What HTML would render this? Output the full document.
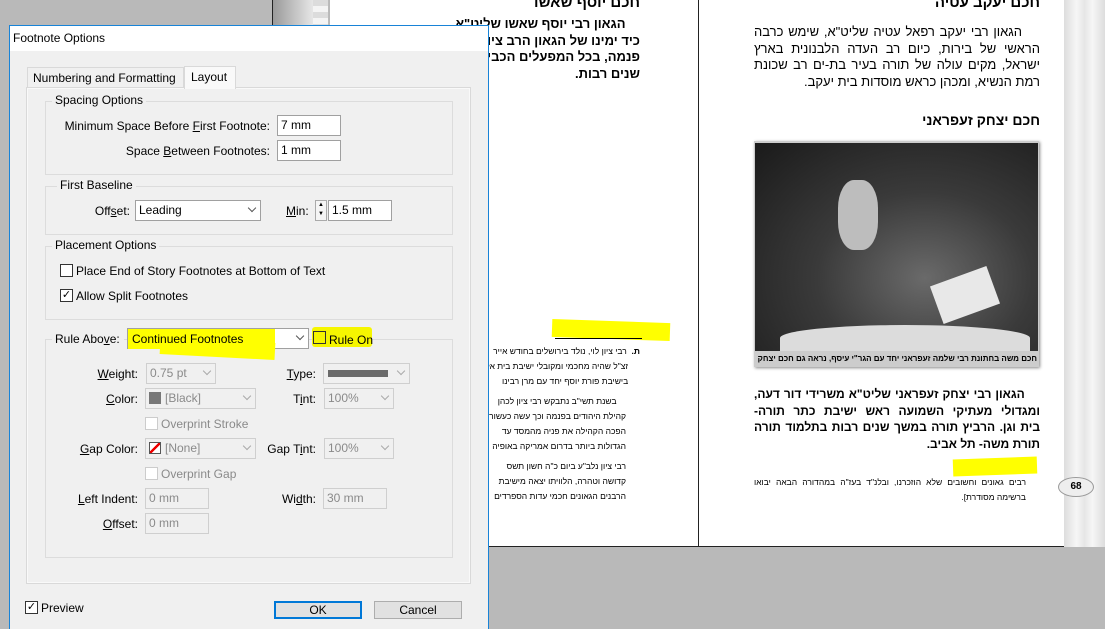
<!DOCTYPE html>
<html><head><meta charset="utf-8"><style>
*{box-sizing:border-box;margin:0;padding:0}
body{width:1105px;height:629px;overflow:hidden;position:relative;background:#b9b9b9;font-family:"Liberation Sans",sans-serif;font-size:12px;color:#000}
.a{position:absolute}
.he{font-family:"Liberation Sans","DejaVu Sans",sans-serif;direction:rtl;text-align:right;white-space:nowrap;overflow:hidden}
.he div{white-space:nowrap}
.j div{text-align:justify;text-align-last:justify}
.j div:last-child{text-align-last:right}
.inp{position:absolute;background:#fff;border:1px solid #a0a0a0;height:21px;padding:2px 3px;font-size:12px}
.dis{background:#f0f0f0;border-color:#cfcfcf;color:#8a8a8a}
.grp{position:absolute;border:1px solid #dcdcdc}
.lg{position:absolute;background:#f0f0f0;padding:0 3px}
.cb{position:absolute;width:13px;height:13px;border:1px solid #333;background:#fff}
.cbd{border-color:#ccc}
.arr{position:absolute;right:5px;top:4px;width:6px;height:6px;border-right:1px solid #555;border-bottom:1px solid #555;transform:rotate(45deg)}
.arrd{border-color:#aaa}
.lab{position:absolute;text-align:right}
u{text-decoration:underline}
</style></head><body>
<!-- document background -->
<div class="a" style="left:272px;top:0;width:1px;height:548px;background:#222"></div>
<div class="a" style="left:273px;top:0;width:40px;height:548px;background:linear-gradient(90deg,#9a9a9a,#e6e6e6)"></div>
<div class="a" style="left:313px;top:0;width:16px;height:548px;background:repeating-linear-gradient(180deg,#dcdcdc 0 6px,#f4f4f4 6px 12px);border-right:1px solid #bbb"></div>
<div class="a" style="left:330px;top:0;width:775px;height:547px;background:#fff;border-bottom:1px solid #222"></div>
<div class="a" style="left:698px;top:0;width:1px;height:547px;background:#222"></div>
<div class="a" style="left:1064px;top:0;width:41px;height:547px;background:linear-gradient(90deg,#ddd,#f6f6f6 30%,#e6e6e6 50%,#f6f6f6 70%,#ddd)"></div>
<div class="a" style="left:1058px;top:477px;width:36px;height:20px;border-radius:50%;background:#eee;border:1px solid #999;font-size:10px;font-weight:bold;text-align:center;line-height:18px">68</div>

<!-- right page text -->
<div class="a he" style="left:740px;top:-6px;width:300px;font-size:15px;font-weight:bold">חכם יעקב עטיה</div>
<div class="a he j" style="left:754px;top:24px;width:286px;font-size:13px;line-height:16.5px">
<div>&nbsp;&nbsp;&nbsp;&nbsp;הגאון רבי יעקב רפאל עטיה שליט"א, שימש כרבה</div>
<div>הראשי של בירות, כיום רב העדה הלבנונית בארץ</div>
<div>ישראל, מקים עולה של תורה בעיר בת-ים רב שכונת</div>
<div>רמת הנשיא, ומכהן כראש מוסדות בית יעקב.</div></div>
<div class="a he" style="left:740px;top:112px;width:300px;font-size:14px;font-weight:bold">חכם יצחק זעפראני</div>
<div class="a" style="left:754px;top:141px;width:285px;height:226px;background:#ccc;box-shadow:1px 1px 3px #888"></div>
<div class="a" style="left:755px;top:143px;width:283px;height:208px;background:radial-gradient(ellipse at 60% 65%,#6a6a6a 0,#3a3a3a 45%,#1a1a1a 100%)"></div>
<div class="a" style="left:838px;top:180px;width:40px;height:70px;background:#bdbdbd;border-radius:40%"></div>
<div class="a" style="left:935px;top:275px;width:60px;height:40px;background:#e8e8e8;transform:rotate(-20deg)"></div>
<div class="a" style="left:780px;top:325px;width:250px;height:26px;background:#dcdcdc;border-radius:50% 50% 0 0"></div>
<div class="a he" style="left:757px;top:354px;width:280px;font-size:8px;font-weight:bold">חכם משה בחתונת רבי שלמה זעפראני יחד עם הגר"י עיסף, נראה גם חכם יצחק זעפראני</div>
<div class="a he j" style="left:754px;top:386px;width:286px;font-size:12px;line-height:16.5px;font-weight:bold">
<div>&nbsp;&nbsp;&nbsp;&nbsp;הגאון רבי יצחק זעפראני שליט"א משרידי דור דעה,</div>
<div>ומגדולי מעתיקי השמועה ראש ישיבת כתר תורה-</div>
<div>בית וגן. הרביץ תורה במשך שנים רבות בתלמוד תורה</div>
<div>תורת משה- תל אביב.</div></div>
<div class="a" style="left:953px;top:458px;width:84px;height:17px;background:#ffff00;transform:rotate(-2deg)"></div>
<div class="a he j" style="left:754px;top:475px;width:272px;font-size:8.5px;line-height:15px">
<div>רבים גאונים וחשובים שלא הוזכרנו, ובלנ"ד בעז"ה במהדורה הבאה יבואו</div>
<div>ברשימה מסודרת].</div></div>

<!-- left page text -->
<div class="a he" style="left:440px;top:-6px;width:200px;font-size:15px;font-weight:bold">חכם יוסף שאשו</div>
<div class="a he" style="left:440px;top:16px;width:200px;font-size:13px;line-height:16.5px;font-weight:bold">
<div>&nbsp;&nbsp;&nbsp;&nbsp;הגאון רבי יוסף שאשו שליט"א</div>
<div>כיד ימינו של הגאון הרב ציון לוי</div>
<div>פנמה, בכל המפעלים הכבירים ש</div>
<div>שנים רבות.</div></div>
<div class="a" style="left:552px;top:321px;width:118px;height:18px;background:#ffff00;transform:rotate(2deg)"></div>
<div class="a" style="left:555px;top:338px;width:87px;height:1px;background:#000"></div>
<div class="a he" style="left:486px;top:344px;width:154px;font-size:8.5px;line-height:15px">
<div><b>ת.</b> &nbsp;רבי ציון לוי, נולד בירושלים בחודש אייר</div>
<div>&nbsp;&nbsp;&nbsp;&nbsp;&nbsp;זצ"ל שהיה מחכמי ומקובלי ישיבת בית אל</div>
<div>&nbsp;&nbsp;&nbsp;&nbsp;&nbsp;בישיבת פורת יוסף יחד עם מרן רבינו</div></div>
<div class="a he" style="left:486px;top:394px;width:140px;font-size:8.5px;line-height:15px">
<div>&nbsp;&nbsp;&nbsp;&nbsp;בשנת תשי"ב נתבקש רבי ציון לכהן</div>
<div>קהילת היהודים בפנמה וכך עשה כעשור</div>
<div>הפכה הקהילה את פניה מהמסד עד</div>
<div>הגדולות ביותר בדרום אמריקה באופיה</div></div>
<div class="a he" style="left:486px;top:459px;width:140px;font-size:8.5px;line-height:15px">
<div>רבי ציון נלב"ע ביום כ"ה חשון תשס</div>
<div>קדושה וטהרה, הלוויתו יצאה מישיבת</div>
<div>הרבנים הגאונים חכמי עדות הספרדים</div></div>

<!-- dialog -->
<div class="a" style="left:9px;top:25px;width:480px;height:604px;background:#f0f0f0;border:1px solid #1883d7;border-bottom:none"></div>
<div class="a" style="left:10px;top:26px;width:478px;height:25px;background:#fff"></div>
<div class="a" style="left:13px;top:31px">Footnote Options</div>
<div class="a" style="left:27px;top:67px;width:157px;height:21px;border:1px solid #d9d9d9;background:#f0f0f0;padding:3px 5px">Numbering and Formatting</div>
<div class="a" style="left:26px;top:87px;width:445px;height:497px;border:1px solid #d9d9d9;background:#f9f9f9"></div>
<div class="a" style="left:28px;top:89px;width:441px;height:493px;background:#f0f0f0"></div>
<div class="a" style="left:184px;top:66px;width:52px;height:23px;border:1px solid #d9d9d9;border-bottom:none;background:#f9f9f9;padding:3px 6px">Layout</div>

<div class="grp" style="left:45px;top:101px;width:408px;height:74px"></div>
<div class="lg" style="left:52px;top:93px">Spacing Options</div>
<div class="lab" style="left:40px;top:119px;width:230px">Minimum Space Before <u>F</u>irst Footnote:</div>
<div class="inp" style="left:277px;top:115px;width:64px">7 mm</div>
<div class="lab" style="left:40px;top:144px;width:230px">Space <u>B</u>etween Footnotes:</div>
<div class="inp" style="left:277px;top:140px;width:64px">1 mm</div>

<div class="grp" style="left:45px;top:186px;width:408px;height:49px"></div>
<div class="lg" style="left:57px;top:178px">First Baseline</div>
<div class="lab" style="left:60px;top:204px;width:70px">Off<u>s</u>et:</div>
<div class="inp" style="left:135px;top:200px;width:126px">Leading<span class="arr"></span></div>
<div class="a" style="left:286px;top:204px"><u>M</u>in:</div>
<div class="a" style="left:315px;top:200px;width:12px;height:21px;border:1px solid #aaa;background:#f5f5f5;font-size:6px;line-height:9px;text-align:center">▲<br>▼</div>
<div class="inp" style="left:328px;top:200px;width:64px">1.5 mm</div>

<div class="grp" style="left:45px;top:246px;width:408px;height:74px"></div>
<div class="lg" style="left:52px;top:238px">Placement Options</div>
<div class="cb" style="left:60px;top:264px"></div>
<div class="a" style="left:76px;top:264px">Place End of Story Footnotes at Bottom of Text</div>
<div class="cb" style="left:60px;top:289px;font-size:11px;line-height:11px;text-align:center">✓</div>
<div class="a" style="left:76px;top:289px">Allow Split Footnotes</div>

<div class="grp" style="left:45px;top:339px;width:408px;height:219px"></div>
<div class="lg" style="left:52px;top:332px;width:72px;height:16px">Rule Abo<u>v</u>e:</div>
<div class="inp" style="left:127px;top:328px;width:182px">&nbsp;<span class="arr"></span></div>
<div class="a" style="left:128px;top:329px;width:147px;height:20px;background:#ffff00"></div>
<div class="a" style="left:160px;top:340px;width:115px;height:17px;background:#ffff00;transform:rotate(3deg)"></div>
<div class="a" style="left:132px;top:332px">Continued Footnotes</div>
<div class="a" style="left:312px;top:327px;width:60px;height:20px;background:#f6f600;border-radius:3px"></div>
<div class="cb" style="left:313px;top:331px;background:transparent"></div>
<div class="a" style="left:329px;top:333px">Rule On</div>

<div class="lab" style="left:60px;top:367px;width:78px"><u>W</u>eight:</div>
<div class="inp dis" style="left:146px;top:363px;width:70px">0.75 pt<span class="arr arrd"></span></div>
<div class="lab" style="left:250px;top:367px;width:66px"><u>T</u>ype:</div>
<div class="inp dis" style="left:323px;top:363px;width:87px"><span class="a" style="left:4px;top:6px;width:60px;height:7px;background:#6a6a6a"></span><span class="arr arrd"></span></div>
<div class="lab" style="left:60px;top:392px;width:78px"><u>C</u>olor:</div>
<div class="inp dis" style="left:145px;top:388px;width:111px"><span style="display:inline-block;width:12px;height:12px;background:#777;vertical-align:-2px;margin-right:4px"></span>[Black]<span class="arr arrd"></span></div>
<div class="lab" style="left:250px;top:392px;width:66px">T<u>i</u>nt:</div>
<div class="inp dis" style="left:324px;top:388px;width:70px">100%<span class="arr arrd"></span></div>
<div class="cb cbd" style="left:145px;top:417px"></div>
<div class="a" style="left:161px;top:417px;color:#8a8a8a">Overprint Stroke</div>
<div class="lab" style="left:50px;top:442px;width:88px"><u>G</u>ap Color:</div>
<div class="inp dis" style="left:145px;top:438px;width:111px"><span style="display:inline-block;width:12px;height:12px;border:1px solid #555;background:linear-gradient(135deg,#fff 42%,#e00 42%,#e00 58%,#fff 58%);vertical-align:-2px;margin-right:4px"></span>[None]<span class="arr arrd"></span></div>
<div class="lab" style="left:240px;top:442px;width:76px">Gap T<u>i</u>nt:</div>
<div class="inp dis" style="left:324px;top:438px;width:70px">100%<span class="arr arrd"></span></div>
<div class="cb cbd" style="left:145px;top:467px"></div>
<div class="a" style="left:161px;top:467px;color:#8a8a8a">Overprint Gap</div>
<div class="lab" style="left:50px;top:492px;width:88px"><u>L</u>eft Indent:</div>
<div class="inp dis" style="left:145px;top:488px;width:64px">0 mm</div>
<div class="lab" style="left:250px;top:492px;width:66px">Wi<u>d</u>th:</div>
<div class="inp dis" style="left:323px;top:488px;width:64px">30 mm</div>
<div class="lab" style="left:50px;top:517px;width:88px"><u>O</u>ffset:</div>
<div class="inp dis" style="left:145px;top:513px;width:64px">0 mm</div>

<div class="cb" style="left:25px;top:601px;font-size:11px;line-height:11px;text-align:center">✓</div>
<div class="a" style="left:41px;top:601px">Preview</div>
<div class="a" style="left:274px;top:601px;width:88px;height:18px;border:2px solid #0078d7;background:#e1e1e1;text-align:center;line-height:14px">OK</div>
<div class="a" style="left:374px;top:601px;width:88px;height:18px;border:1px solid #adadad;background:#e1e1e1;text-align:center;line-height:16px">Cancel</div>
</body></html>
